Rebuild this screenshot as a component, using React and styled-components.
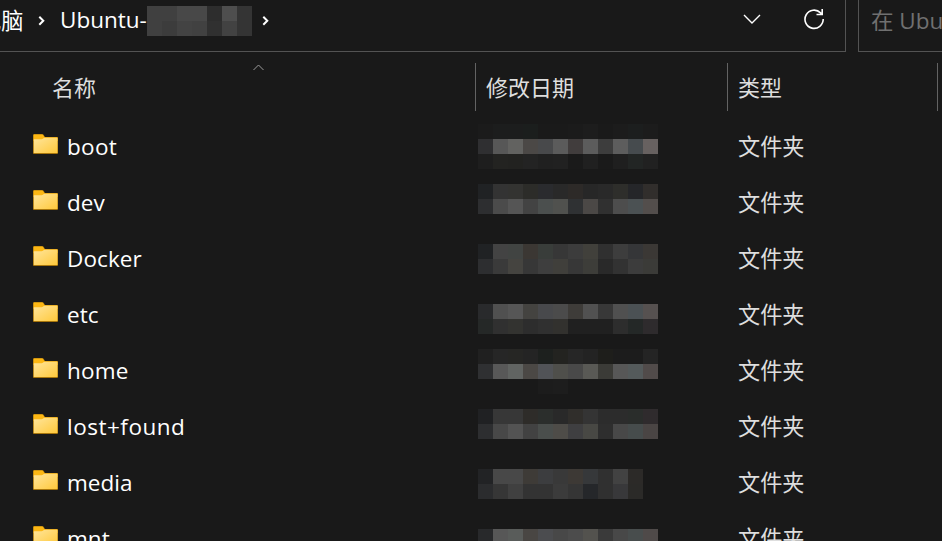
import React from "react";
import styled, { createGlobalStyle } from "styled-components";

const GlobalStyle = createGlobalStyle`
  * { box-sizing: border-box; }
  html, body { margin: 0; background: #191919; overflow: hidden; }
`;

const Window = styled.div`
  width: 942px;
  height: 541px;
  overflow: hidden;
  background: #191919;
  color: #fff;
  font-family: "Open Sans", "Noto Sans CJK SC", sans-serif;
  font-size: 22.5px;
  line-height: 30px;
  white-space: nowrap;
`;

const TopBar = styled.div`
  display: flex;
  gap: 12px;
  height: 52px;
`;

const AddressBar = styled.div`
  display: flex;
  align-items: flex-start;
  width: 846px;
  flex: none;
  border-right: 1px solid #535353;
  border-bottom: 1px solid #535353;
  overflow: hidden;
`;

const Crumb = styled.span`
  width: ${(p) => p.$width}px;
  margin-left: ${(p) => p.$left}px;
  margin-top: ${(p) => p.$top}px;
  flex: none;
  font-size: ${(p) => p.$size}px;
`;

const BarIcon = styled.svg`
  flex: none;
  margin-left: ${(p) => p.$left}px;
  margin-top: ${(p) => p.$top}px;
  fill: none;
  stroke: #fff;
`;

const SearchBox = styled.div`
  flex: none;
  width: 100px;
  padding: 6px 0 0 12px;
  border-left: 1px solid #535353;
  border-bottom: 1px solid #535353;
  color: #707070;
`;

const HeaderRow = styled.div`
  display: grid;
  grid-template-columns: 475px 252px 210px 5px;
  height: 48px;
  margin-top: 11px;
`;

const HeaderCell = styled.div`
  display: flex;
  align-items: flex-start;
  padding: 9px 0 0 ${(p) => (p.$first ? 52 : 10)}px;
  border-left: ${(p) => (p.$first ? "none" : "1px solid #636363")};
  color: #dedede;
  font-size: 22px;
`;

const SortIcon = styled.svg`
  flex: none;
  margin-left: 156px;
  margin-top: -9px;
  fill: none;
  stroke: #9b9b9b;
`;

const FileList = styled.div`
  padding-top: 8px;
`;

const FileRow = styled.div`
  display: grid;
  grid-template-columns: 33px 34px 411px 260px 1fr;
  height: 56px;
`;

const FolderSvg = styled.svg`
  grid-column: 2;
  margin-top: 14px;
`;

const FileName = styled.span`
  padding-top: 13px;
  letter-spacing: ${(p) => p.$spacing}px;
`;

const FileType = styled.span`
  padding-top: 13px;
  color: #dedede;
  font-size: 22.2px;
`;

const Mosaic = styled.div`
  display: grid;
  flex: none;
  align-content: start;
  grid-template-columns: repeat(${(p) => p.$cols}, 15px);
  grid-auto-rows: 15px;
  margin-top: ${(p) => p.$top}px;
  height: 30px;
`;

const Tile = styled.i`
  background: ${(p) => p.$color};
`;

function Pixels({ rows, top }) {
  const grid = rows.map((r) => r.split(" "));
  return (
    <Mosaic $cols={grid[0].length} $top={top}>
      {grid.flat().map((c, i) => (
        <Tile key={i} $color={`#${c}`} />
      ))}
    </Mosaic>
  );
}

function Folder() {
  return (
    <FolderSvg width="26" height="22" viewBox="0 0 26 22">
      <defs>
        <linearGradient id="folderFront" x1="0" y1="0" x2="1" y2="1">
          <stop offset="0" stopColor="#ffe59b" />
          <stop offset="1" stopColor="#ffc93c" />
        </linearGradient>
      </defs>
      <path d="M0 2.2Q0 1 1.2 1H9.2Q10.2 1 10.8 2L12 4H24Q25 4 25 5V20Q25 21 24 21H1Q0 21 0 20Z" fill="#a8760c" />
      <path d="M.6 2.3Q.6 1.5 1.3 1.5H9Q9.8 1.5 10.4 2.4L11.5 4.2H24.5V8H.6Z" fill="#fcb714" />
      <path d="M.8 6.2H8.5Q9.5 6.2 10.2 5.6L11.3 4.7H24Q24.5 4.7 24.5 5.4V20H.8Z" fill="url(#folderFront)" />
    </FolderSvg>
  );
}

const CRUMB_PIXELS = [
  "404040 404040 484848 484848 2d2d2d 4e4e4e 343434",
  "404040 3c3c3c 434343 414141 303030 424242 343434",
];

const FILES = [
  { name: "boot", spacing: 0.3, top: 5, rows: [
    "1b1b1b 1c1d1d 1c1d1d 1b1e1d 1a1a1a 1a1a1a 1b1b1b 1d1d1d 1a1a1a 1c1c1c 1c1e1e 1c1c1c",
    "2f2f31 575757 626260 4b4846 48494b 5b5b5b 413d3d 5c5c5c 3d3d3d 5d5d5d 464b4e 676160",
    "1e1e1e 232321 222220 232323 202020 212121 1a1a1a 202020 1a1a1a 1f1f1f 222524 212121",
  ] },
  { name: "dev", spacing: 0, top: 9, rows: [
    "202224 333333 333331 2c2c29 2a2b2e 292929 2d2a28 272727 292929 2e2e2b 252629 312e2c",
    "2d2e30 4b4b4b 555555 434343 4b4f4e 50514e 2f3133 4b4846 303030 4d4d4d 4b5153 534e4c",
  ] },
  { name: "Docker", spacing: 0.1, top: 13, rows: [
    "202224 434343 414442 3b3733 393d3a 373737 3c3c3c 41403b 303030 3d3d3d 353638 3b3835",
    "2d2e30 3a3a3a 454440 373737 3e3e3e 403f3b 373737 3d3d39 292929 323232 3c3c3c 3b3b38",
  ] },
  { name: "etc", spacing: 0, top: 17, rows: [
    "292a2c 505050 565656 444340 48494c 4b4b4b 3e3c39 515151 383838 505050 4b5154 565150",
    "252827 303030 333330 2d2d2d 303030 32312e 202020 202020 202020 2d2d2d 242827 2e2b2d",
  ] },
  { name: "home", spacing: 0.2, top: 6, rows: [
    "202020 262626 262624 242424 1d201e 232320 262626 232323 1e1e1b 1c1c1c 1c1c1c 242424",
    "2f3032 585858 616462 4b4845 515357 4f4f4b 494949 595955 3b3b37 575757 545a5b 514b4a",
    "191919 191919 191919 191919 1c1c1c 1d1d1d 191919 191919 191919 191919 191919 191919",
  ] },
  { name: "lost+found", spacing: 0.5, top: 10, rows: [
    "202123 373737 373737 2e2c29 2b2e2c 292929 302e2b 343434 2c2c2c 2c2c2c 2a2d2b 2f2b2d",
    "2d2e30 484848 535353 424242 4a4e4c 4e4c48 3f3f41 484844 2e2e2e 484848 464c4c 4a4544",
  ] },
  { name: "media", spacing: 0, top: 14, rows: [
    "222325 484848 484848 3e3b37 3c3d3f 393939 3d3935 36383a 303030 424242 2c2a28",
    "2b2c2e 363636 404040 333333 333333 3b3b3b 353535 25272a 303030 38383a 2b2a28",
  ] },
  { name: "mnt", spacing: 0, top: 18, rows: [
    "28292b 575757 595c5a 494643 4b4c4f 484848 4c4c4c 53524e 3a3a3a 484848 484d4d 4f4a49",
  ] },
];

export default function App() {
  return (
    <>
      <GlobalStyle />
      <Window>
        <TopBar>
          <AddressBar>
            <Crumb $width={44} $left={-21} $top={6} $size={22.2}>电脑</Crumb>
            <BarIcon $left={15} $top={15} width="8" height="12" strokeWidth="2">
              <path d="M1.3 1.8 5.3 5.8 1.3 9.8" />
            </BarIcon>
            <Crumb $width={87} $left={14} $top={5} $size={22.5}>Ubuntu-</Crumb>
            <Pixels rows={CRUMB_PIXELS} top={6} />
            <BarIcon $left={10} $top={15} width="8" height="12" strokeWidth="2">
              <path d="M1.3 1.8 5.3 5.8 1.3 9.8" />
            </BarIcon>
            <BarIcon $left={473} $top={13} width="18" height="12" strokeWidth="1.4">
              <path d="M1 2 9 10 17 2" />
            </BarIcon>
            <BarIcon $left={42} $top={8} width="22" height="22" strokeWidth="1.6">
              <path d="M20.2 11A9.1 9.1 0 1 1 17.6 4.9L19 6.3M19.2 1V6.5H13.5" />
            </BarIcon>
          </AddressBar>
          <SearchBox>在 Ubuntu</SearchBox>
        </TopBar>
        <HeaderRow>
          <HeaderCell $first>
            名称
            <SortIcon width="14" height="10" strokeWidth="1">
              <path d="M1.5 7 6.5 2 11.5 7" />
            </SortIcon>
          </HeaderCell>
          <HeaderCell>修改日期</HeaderCell>
          <HeaderCell>类型</HeaderCell>
          <HeaderCell />
        </HeaderRow>
        <FileList>
          {FILES.map((f) => (
            <FileRow key={f.name}>
              <Folder />
              <FileName $spacing={f.spacing}>{f.name}</FileName>
              <Pixels rows={f.rows} top={f.top} />
              <FileType>文件夹</FileType>
            </FileRow>
          ))}
        </FileList>
      </Window>
    </>
  );
}
